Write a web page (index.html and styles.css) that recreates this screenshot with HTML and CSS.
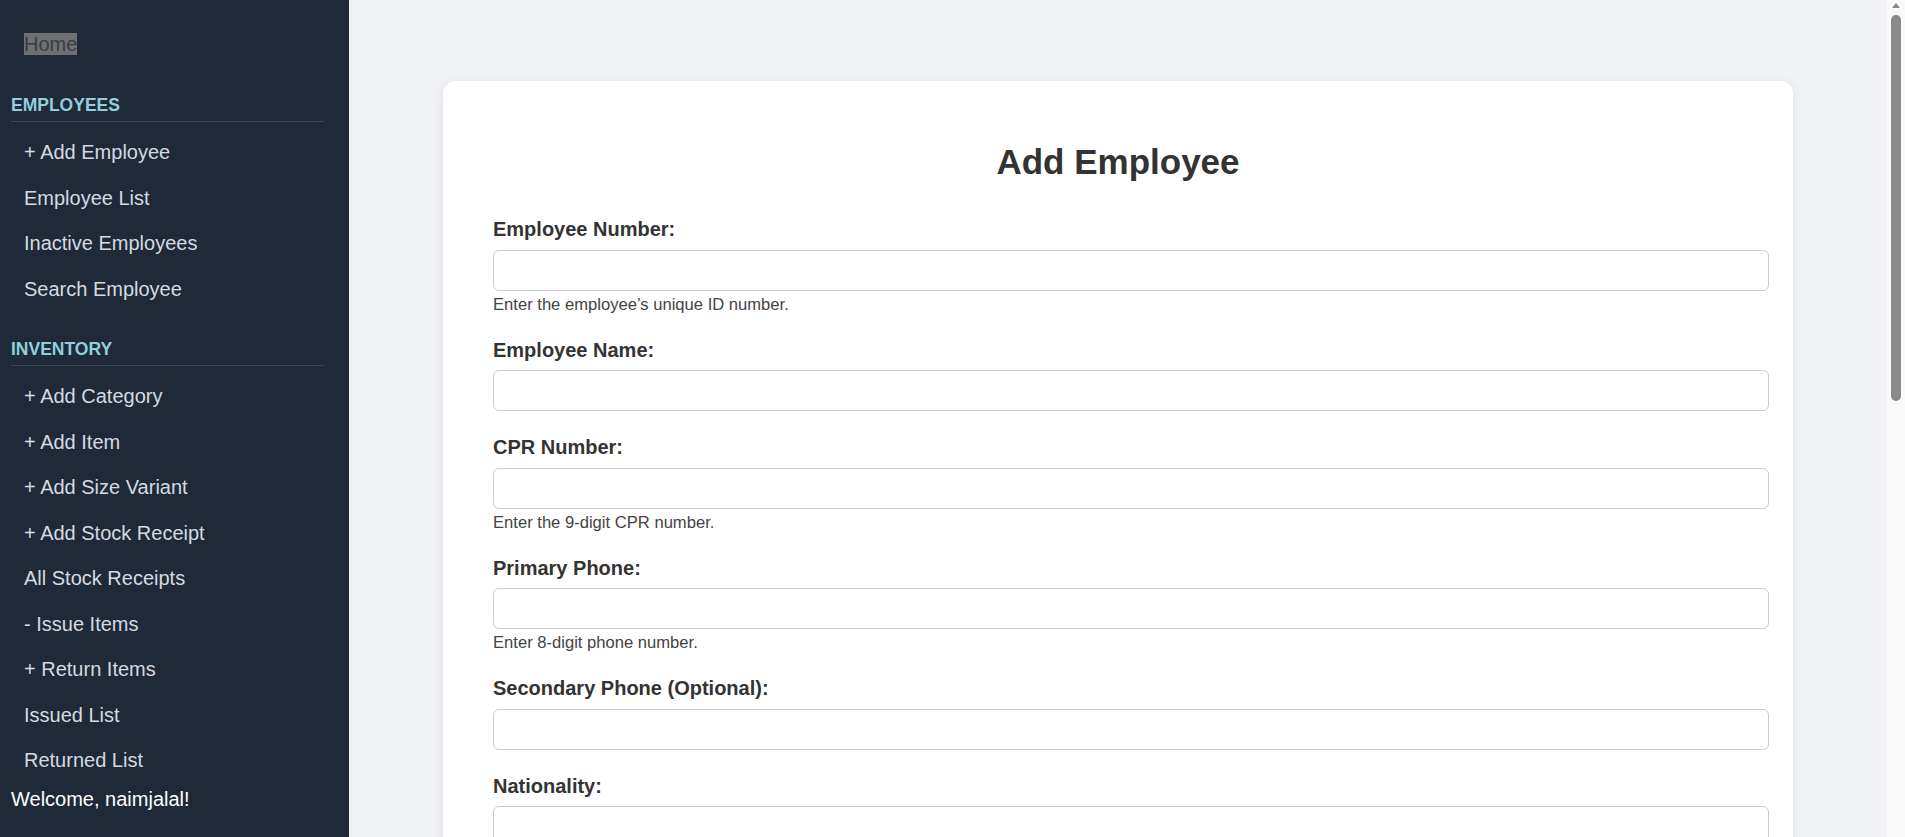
FILE: index.html
```html
<!DOCTYPE html>
<html lang="en">
<head>
<meta charset="utf-8">
<title>Add Employee</title>
<link rel="stylesheet" href="styles.css">
</head>
<body>
<div class="layout">
  <aside class="sidebar">
    <nav class="nav">
      <a class="nav-link home" href="#"><span class="home-text">Home</span></a>
      <div class="section">
        <h3 class="section-title">EMPLOYEES</h3>
        <a class="nav-link" href="#">+ Add Employee</a>
        <a class="nav-link" href="#">Employee List</a>
        <a class="nav-link" href="#">Inactive Employees</a>
        <a class="nav-link" href="#">Search Employee</a>
      </div>
      <div class="section">
        <h3 class="section-title">INVENTORY</h3>
        <a class="nav-link" href="#">+ Add Category</a>
        <a class="nav-link" href="#">+ Add Item</a>
        <a class="nav-link" href="#">+ Add Size Variant</a>
        <a class="nav-link" href="#">+ Add Stock Receipt</a>
        <a class="nav-link" href="#">All Stock Receipts</a>
        <a class="nav-link" href="#">- Issue Items</a>
        <a class="nav-link" href="#">+ Return Items</a>
        <a class="nav-link" href="#">Issued List</a>
        <a class="nav-link" href="#">Returned List</a>
      </div>
    </nav>
    <div class="welcome">Welcome, naimjalal!</div>
  </aside>
  <main class="main">
    <div class="card">
      <h2 class="card-title">Add Employee</h2>
      <form class="form">
        <div class="form-group">
          <label class="label" for="empno">Employee Number:</label>
          <input class="input" id="empno" type="text">
          <div class="help">Enter the employee’s unique ID number.</div>
        </div>
        <div class="form-group">
          <label class="label" for="name">Employee Name:</label>
          <input class="input" id="name" type="text">
        </div>
        <div class="form-group">
          <label class="label" for="cpr">CPR Number:</label>
          <input class="input" id="cpr" type="text">
          <div class="help">Enter the 9-digit CPR number.</div>
        </div>
        <div class="form-group">
          <label class="label" for="phone1">Primary Phone:</label>
          <input class="input" id="phone1" type="text">
          <div class="help">Enter 8-digit phone number.</div>
        </div>
        <div class="form-group">
          <label class="label" for="phone2">Secondary Phone (Optional):</label>
          <input class="input" id="phone2" type="text">
        </div>
        <div class="form-group">
          <label class="label" for="nat">Nationality:</label>
          <input class="input" id="nat" type="text">
        </div>
        <div class="form-group">
          <label class="label" for="dept">Department:</label>
          <input class="input" id="dept" type="text">
        </div>
        <div class="form-group">
          <label class="label" for="pos">Position:</label>
          <input class="input" id="pos" type="text">
        </div>
        <div class="form-group">
          <label class="label" for="join">Joining Date:</label>
          <input class="input" id="join" type="text">
        </div>
        <div class="form-group">
          <label class="label" for="email">Email (Optional):</label>
          <input class="input" id="email" type="text">
        </div>
        <div class="form-group">
          <label class="label" for="addr">Address:</label>
          <input class="input" id="addr" type="text">
        </div>
        <button class="submit" type="button">Add Employee</button>
      </form>
    </div>
  </main>
</div>
<div class="scrollbar" aria-hidden="true">
  <div class="scroll-arrow"></div>
  <div class="scroll-thumb"></div>
</div>
</body>
</html>
```
FILE: styles.css
```css
html, body {
  margin: 0;
  padding: 0;
}

body {
  font-family: "Liberation Sans", Arial, sans-serif;
  background: #f0f2f5;
  color: #333;
}

.layout {
  display: flex;
  min-height: 100vh;
}

.sidebar {
  width: 349px;
  flex-shrink: 0;
  box-sizing: border-box;
  background: #1f2937;
  padding: 21.5px 25px 0 11px;
}

.nav {
  display: flex;
  flex-direction: column;
}

.nav-link {
  display: block;
  padding: 11.25px 13px;
  font-size: 20px;
  line-height: 23px;
  color: #d5dae0;
  text-decoration: none;
}

.home {
  margin-bottom: 1px;
}

.home-text {
  background: #6e7073;
  color: #3b3e43;
}

.section {
  margin-top: 27px;
  display: flex;
  flex-direction: column;
}

.section-title {
  margin: 0 0 8px;
  padding-bottom: 6px;
  border-bottom: 1px solid #3d4654;
  font-size: 17.5px;
  line-height: 20px;
  font-weight: bold;
  color: #8fd0dc;
}

.welcome {
  margin-top: 4px;
  font-size: 20px;
  line-height: 23px;
  color: #ffffff;
}

.main {
  flex: 1;
  padding: 81px 18px 81px 0;
}

.card {
  max-width: 1350px;
  margin: 0 auto;
  box-sizing: border-box;
  padding: 50px;
  background: #ffffff;
  border-radius: 12px;
  box-shadow: 0 2px 12px rgba(0, 0, 0, 0.08);
}

.card-title {
  margin: 11px 0 37px;
  text-align: center;
  font-size: 35px;
  line-height: 39px;
  font-weight: bold;
  color: #333;
}

.form-group {
  margin-bottom: 25px;
}

.label {
  display: block;
  margin-bottom: 8.5px;
  font-size: 20px;
  line-height: 23px;
  font-weight: bold;
  color: #333;
}

.input {
  display: block;
  width: 100%;
  padding: 12px;
  border: 1px solid #cccccc;
  border-radius: 6px;
  font-family: "Liberation Sans", Arial, sans-serif;
  font-size: 13.33px;
  line-height: 15px;
  height: 15px;
  background: #fff;
  color: #333;
}

.help {
  margin-top: 4px;
  font-size: 16.6px;
  line-height: 19px;
  color: #444;
}

.submit {
  display: block;
  width: 100%;
  margin-top: 10px;
  padding: 14px;
  border: none;
  border-radius: 6px;
  background: #2563eb;
  color: #fff;
  font-family: "Liberation Sans", Arial, sans-serif;
  font-size: 20px;
  font-weight: bold;
}

.scrollbar {
  position: fixed;
  top: 0;
  right: 0;
  width: 18px;
  height: 100vh;
  background: #f9f9f9;
  display: flex;
  flex-direction: column;
  align-items: center;
}

.scroll-arrow {
  margin-top: 3px;
  width: 0;
  height: 0;
  border-left: 4px solid transparent;
  border-right: 4px solid transparent;
  border-bottom: 5px solid #8a8a8a;
}

.scroll-thumb {
  margin-top: 7px;
  width: 10px;
  height: 386px;
  border-radius: 5px;
  background: #8a8a8a;
}
```
